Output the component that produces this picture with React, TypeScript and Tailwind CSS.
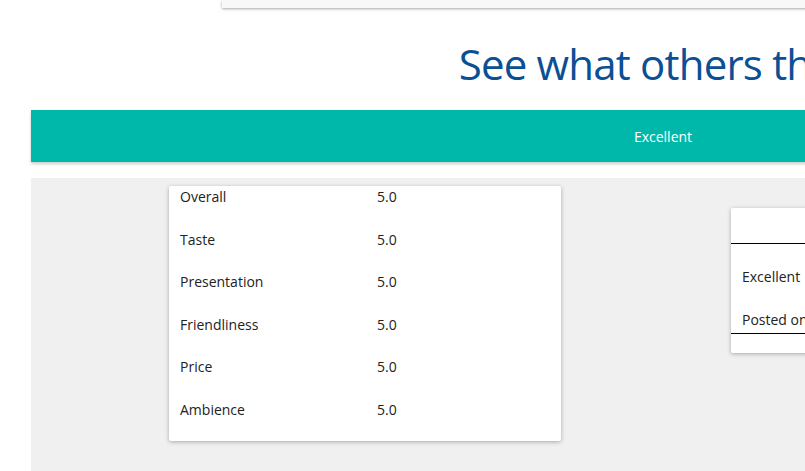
const RATINGS = [
  ['Overall', '5.0'],
  ['Taste', '5.0'],
  ['Presentation', '5.0'],
  ['Friendliness', '5.0'],
  ['Price', '5.0'],
  ['Ambience', '5.0'],
];

export default function App() {
  return (
    <div className="w-[805px] h-[471px] overflow-hidden bg-white font-['Open_Sans',sans-serif] text-[#222]">
      <div className="w-[1326px] px-[31px]">
        {/* top card remains */}
        <div className="ml-[191px] w-[900px] h-[8px] bg-[#f8f8f8] shadow-[0_1px_3px_rgba(0,0,0,0.35)]" />

        <h1 className="mt-[30px] h-[72px] text-center text-[42px] tracking-[-0.8px] leading-[52px] text-[#0b4f94]">
          See what others think
        </h1>

        {/* tab bar */}
        <div className="h-[52px] bg-[#00b8a9] flex items-center justify-center text-white text-[14px] shadow-[0_2px_3px_rgba(0,0,0,0.2)]">
          Excellent
        </div>

        {/* reviews */}
        <div className="mt-[16px] bg-[#f0f0f0] h-[400px] pt-[8px] flex items-start">
          <div className="ml-[138px] w-[392px] bg-white rounded-[2px] shadow-[0_1px_4px_rgba(0,0,0,0.3)]">
            {RATINGS.map(([label, value]) => (
              <div key={label} className="h-[42.5px] flex text-[14px] leading-[22px] pl-[11px]">
                <span className="w-[197px]">{label}</span>
                <span>{value}</span>
              </div>
            ))}
          </div>

          <div className="ml-[170px] mt-[22px] w-[400px] h-[145px] bg-white rounded-[2px] shadow-[0_1px_4px_rgba(0,0,0,0.3)] text-[14px]">
            <div className="h-[36px] border-b border-black" />
            <div className="px-[11px] pt-[22px] leading-[22px]">Excellent</div>
            <div className="px-[11px] pt-[21px] leading-[22px] border-b border-black h-[46px] box-border">
              Posted on
            </div>
          </div>
        </div>
      </div>
    </div>
  );
}
